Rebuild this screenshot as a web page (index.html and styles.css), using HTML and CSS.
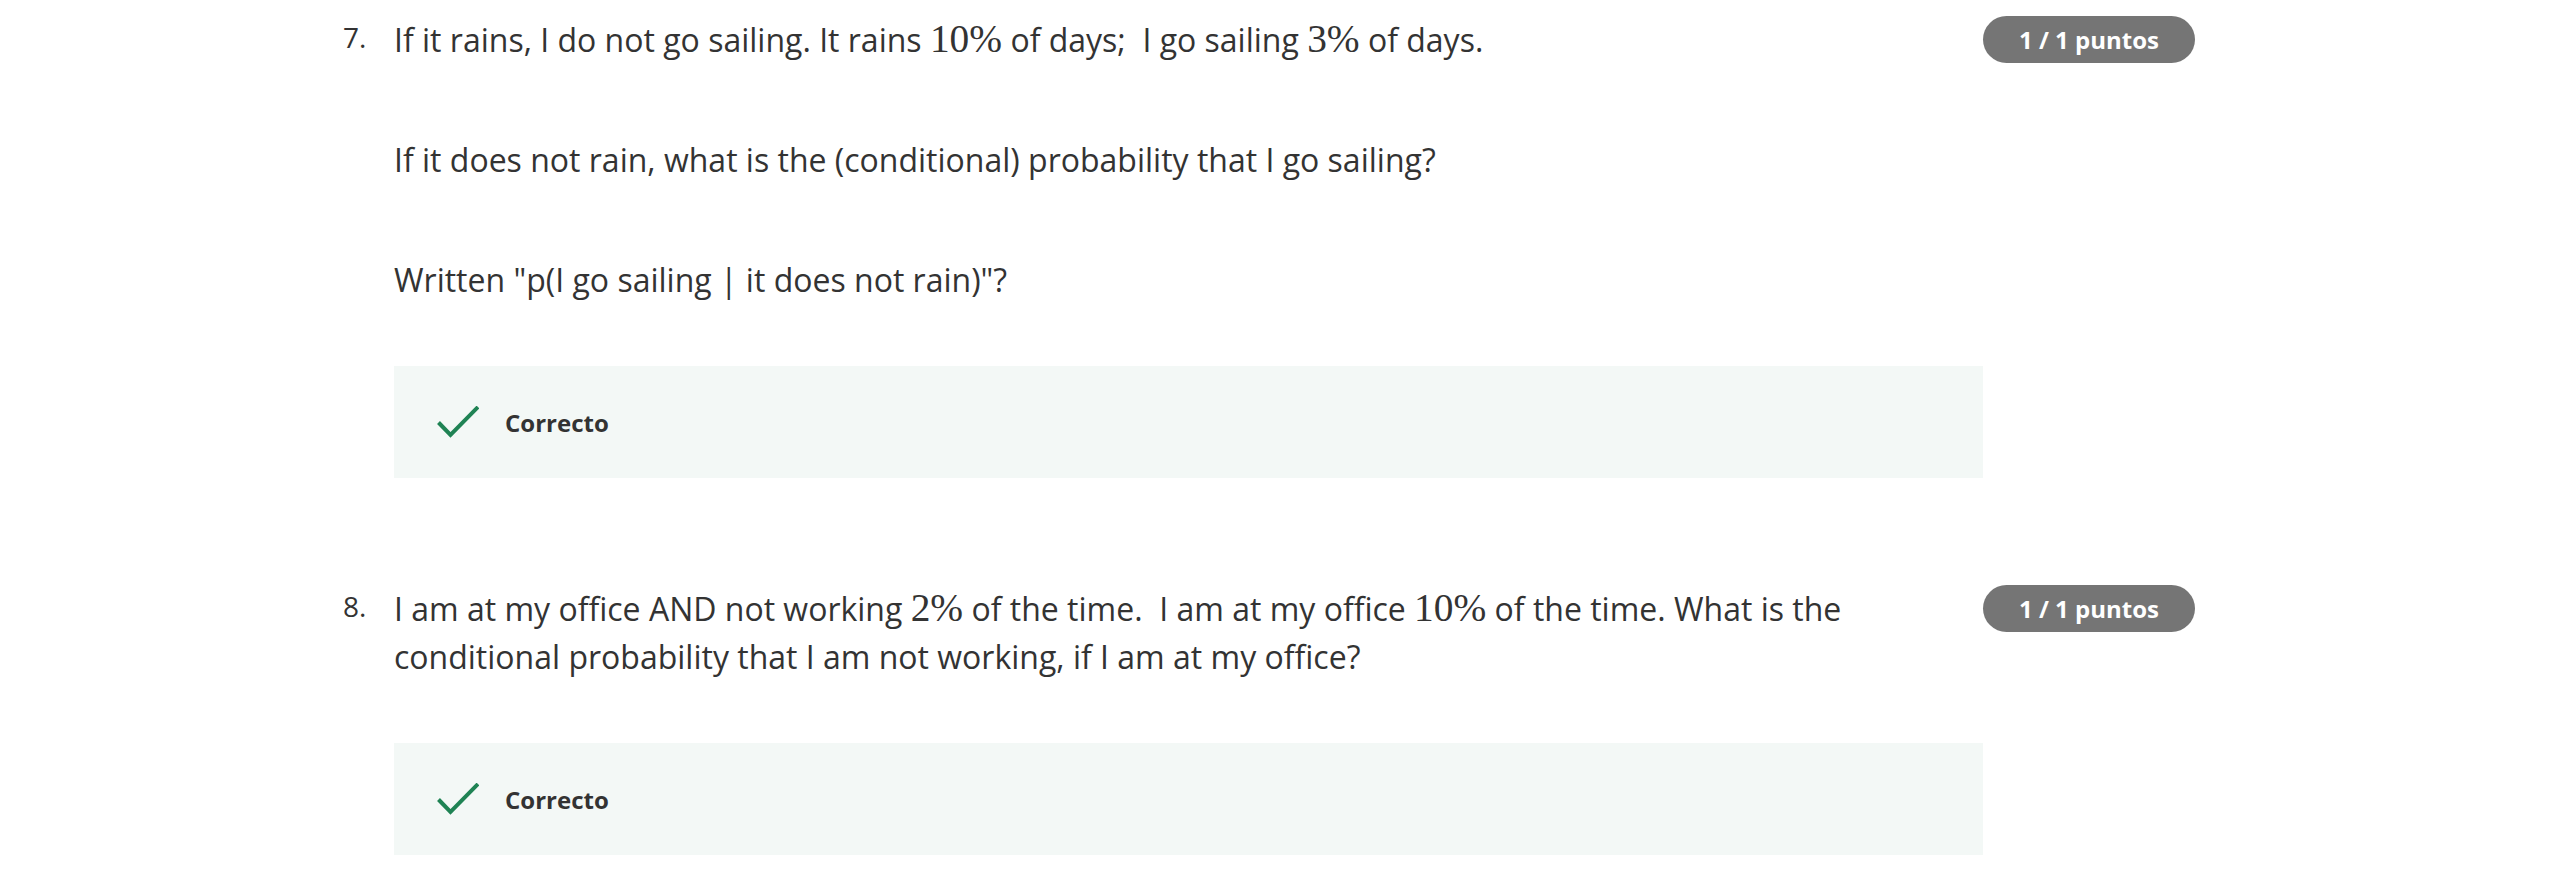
FILE: index.html
```html
<!DOCTYPE html>
<html lang="en">
<head>
<meta charset="utf-8">
<title>Quiz</title>
<link rel="stylesheet" href="styles.css">
</head>
<body>
<main class="quiz">
  <section class="question">
    <div class="q-num">7.</div>
    <div class="q-body">
      <p class="q-text">If it rains, I do not go sailing. It rains <span class="math">10%</span> of days;&nbsp; I go sailing <span class="math">3%</span> of days.</p>
      <p class="q-text">If it does not rain, what is the (conditional) probability that I go sailing?</p>
      <p class="q-text">Written "p(I go sailing | it does not rain)"?</p>
      <div class="feedback">
        <svg class="check" width="42" height="32" viewBox="0 0 42 32" aria-hidden="true"><path d="M1.5 16.5 L13.5 29 L41 1" fill="none" stroke="#1f8354" stroke-width="4"/></svg>
        <span class="feedback-label">Correcto</span>
      </div>
    </div>
    <div class="q-score"><span class="badge">1 / 1 puntos</span></div>
  </section>

  <section class="question">
    <div class="q-num">8.</div>
    <div class="q-body">
      <p class="q-text">I am at my office AND not working <span class="math">2%</span> of the time.&nbsp; I am at my office <span class="math">10%</span> of the time. What is the conditional probability that I am not working, if I am at my office?</p>
      <div class="feedback">
        <svg class="check" width="42" height="32" viewBox="0 0 42 32" aria-hidden="true"><path d="M1.5 16.5 L13.5 29 L41 1" fill="none" stroke="#1f8354" stroke-width="4"/></svg>
        <span class="feedback-label">Correcto</span>
      </div>
    </div>
    <div class="q-score"><span class="badge">1 / 1 puntos</span></div>
  </section>
</main>
</body>
</html>
```

FILE: styles.css
```css
html, body {
  margin: 0;
  padding: 0;
  background: #ffffff;
}

body {
  font-family: "Open Sans", "Noto Sans", sans-serif;
  color: #333333;
}

.quiz {
  display: flex;
  flex-direction: column;
  gap: 107px;
  padding: 16px 0 0 343px;
}

.question {
  display: flex;
  align-items: flex-start;
}

.q-num {
  width: 51px;
  flex: none;
  font-size: 28px;
  line-height: 42px;
  color: #333333;
}

.q-body {
  width: 1589px;
  flex: none;
}

.q-text {
  margin: 0 0 72px 0;
  font-size: 32px;
  line-height: 48px;
}

.q-text:last-of-type {
  margin-bottom: 62px;
}

.math {
  font-family: "Liberation Serif", "DejaVu Serif", serif;
  font-size: 1.23em;
  line-height: 0;
}

.feedback {
  display: flex;
  align-items: center;
  height: 112px;
  padding-left: 43px;
  background: #f3f8f6;
  box-sizing: border-box;
}

.check {
  flex: none;
  margin-right: 26px;
}

.feedback-label {
  font-size: 24px;
  font-weight: 700;
  color: #333333;
}

.q-score {
  flex: none;
  width: 212px;
}

.badge {
  display: flex;
  align-items: center;
  justify-content: center;
  height: 47px;
  border-radius: 24px;
  background: #757575;
  color: #ffffff;
  font-size: 24px;
  font-weight: 700;
}
```
